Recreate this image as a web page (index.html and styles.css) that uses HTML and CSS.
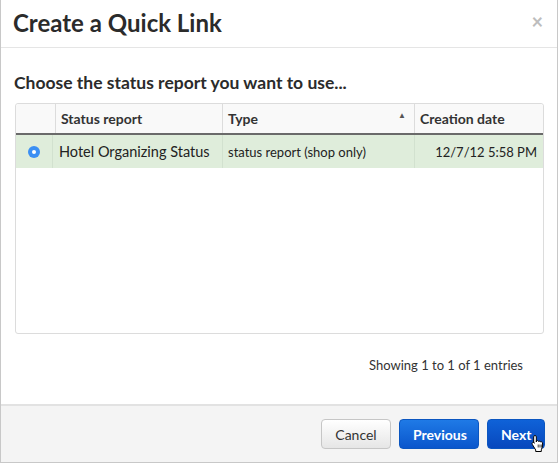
FILE: index.html
```html
<!DOCTYPE html>
<html>
<head>
<meta charset="utf-8">
<link rel="stylesheet" href="styles.css">
</head>
<body>
<div class="dialog">
  <div class="header">
    <h1 class="title">Create a Quick Link</h1>
    <span class="close">×</span>
  </div>
  <div class="body">
    <h2 class="subtitle">Choose the status report you want to use...</h2>
    <div class="table">
      <div class="row head">
        <div class="cell c0"></div>
        <div class="cell c1">Status report</div>
        <div class="cell c2">Type<span class="sort">▲</span></div>
        <div class="cell c3">Creation date</div>
      </div>
      <div class="row sel">
        <div class="cell c0"><span class="radio"></span></div>
        <div class="cell c1 name">Hotel Organizing Status</div>
        <div class="cell c2 type">status report (shop only)</div>
        <div class="cell c3 date">12/7/12 5:58 PM</div>
      </div>
    </div>
    <div class="info">Showing 1 to 1 of 1 entries</div>
  </div>
  <div class="footer">
    <button class="btn cancel">Cancel</button>
    <button class="btn primary">Previous</button>
    <button class="btn primary hover">Next
      <svg class="cursor" width="14" height="18" viewBox="0 0 14 18"><path d="M4 1.5c.8 0 1.3.5 1.3 1.3V8l.2-1.2c.8-.5 1.8-.2 2 .6.6-.5 1.700-.3 2 .5.7-.4 1.8 0 2 .9.3 1.4.2 3.2-.3 4.6l-.9 2.4v1.7H4.7v-1.5L1.3 10.4c-.5-.7-.2-1.6.6-1.9.6-.2 1.2 0 1.6.5l-.8-.6V2.8C2.7 2 3.2 1.5 4 1.5z" fill="#fff" stroke="#000" stroke-width="1" stroke-linejoin="round"/><path d="M7.2 10.5v3M9 10.5v3M10.8 10.5v3" stroke="#000" stroke-width=".8"/></svg>
    </button>
  </div>
</div>
</body>
</html>
```
FILE: styles.css
```css
* { box-sizing: border-box; }
html, body { margin: 0; padding: 0; background: #fff; }
body { font-family: Lato, "Noto Sans", sans-serif; color: #333; }
.dialog {
  width: 558px;
  height: 463px;
  border-left: 1px solid #c8c8c8;
  border-right: 1px solid #c8c8c8;
  border-bottom: 1px solid #c8c8c8;
  display: flex;
  flex-direction: column;
}
.header {
  height: 48px;
  border-bottom: 1px solid #e5e5e5;
  display: flex;
  align-items: center;
  justify-content: space-between;
  padding: 0 14px 3px 12px;
}
.title { margin: 0; font-size: 24px; font-weight: 700; color: #2b2b2b; letter-spacing: 0; }
.close { font-size: 20px; color: #bdbdbd; font-weight: 700; line-height: 1; margin-top: -2px; }
.body { flex: 1; padding: 24px 12px 0 13px; }
.subtitle { margin: 0 0 10px 0; font-size: 17.5px; font-weight: 700; color: #2b2b2b; }
.table {
  margin-left: 1px;
  width: 529px;
  height: 231px;
  border: 1px solid #dcdcdc;
  border-radius: 3px;
}
.row { display: flex; }
.head {
  height: 31px;
  background: #f9f9f9;
  border-bottom: 2px solid #6a6a6a;
  border-radius: 3px 3px 0 0;
  font-weight: 700;
  font-size: 14px;
  color: #333;
}
.cell { display: flex; align-items: center; }
.head .cell { padding-left: 5px; border-left: 1px solid #dcdcdc; }
.head .cell.c0 { border-left: none; }
.c0 { width: 39px; }
.c1 { width: 167px; }
.c2 { width: 192px; position: relative; }
.c3 { flex: 1; }
.sel { height: 33px; background: #dfeddb; font-size: 14.5px; color: #222; }
.sel .cell { border-left: 1px solid #d2e1cf; }
.sel .c0 { border-left: none; width: 36px; justify-content: center; }
.sel .c1 { width: 170px; padding-left: 6px; }
.sel .c2 { padding-left: 5px; font-size: 13px; }
.sel .c3 { justify-content: flex-end; padding-right: 6px; font-size: 13px; }
.radio {
  width: 12px; height: 12px; border-radius: 50%;
  background: #3b8ff3;
  position: relative;
  margin-top: 1px;
}
.radio::after {
  content: ""; position: absolute; left: 4px; top: 4px; width: 4px; height: 4px; border-radius: 50%; background: #fff;
}
.sort { position: absolute; right: 8px; top: 6px; font-size: 8px; color: #555; }
.info { text-align: right; font-size: 13px; color: #333; padding: 23px 22px 0 0; }
.footer {
  height: 58px;
  background: #f4f4f4;
  border-top: 2px solid #e2e2e2;
  display: flex;
  justify-content: flex-end;
  align-items: center;
  gap: 8px;
  padding: 0 12px 0 0;
}
.btn {
  font-family: inherit;
  height: 30px;
  border-radius: 4px;
  font-size: 14px;
  padding: 0 13px;
  position: relative;
}
.cancel {
  background: linear-gradient(#ffffff, #e6e6e6);
  border: 1px solid #c6c6c6;
  color: #333;
  width: 70px;
}
.primary {
  background: linear-gradient(#1f7ae6, #0a56cc);
  border: 1px solid #0b56c0;
  color: #fff;
  font-weight: 700;
  width: 80px;
}
.hover { width: 58px; background: linear-gradient(#0f62d8, #0848bd); }
.cursor { position: absolute; left: 43px; top: 14px; }
```
